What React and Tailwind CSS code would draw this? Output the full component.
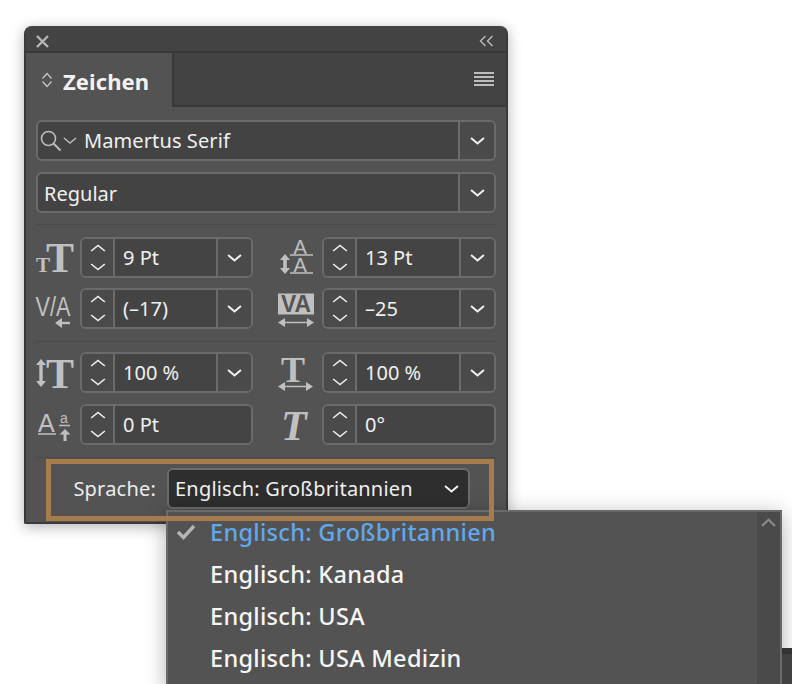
import React from "react";

const Chevron = ({ w = 15, h = 8, className = "", stroke = "#f2f2f2", sw = 1.8 }) => (
  <svg width={w} height={h} viewBox="0 0 14 8" preserveAspectRatio="none" fill="none" className={className}>
    <path d="M1 1 L7 6.5 L13 1" stroke={stroke} strokeWidth={sw} />
  </svg>
);

const Stepper = () => (
  <div className="w-[33px] h-full shrink-0 flex flex-col items-center justify-center gap-[11px] border-r-2 border-[#6b6b6b] bg-[#4a4a4a]">
    <Chevron w={16} h={8} className="rotate-180" stroke="#ececec" sw={1.4} />
    <Chevron w={16} h={8} stroke="#ececec" sw={1.4} />
  </div>
);

const NumField = ({ value, dropdown = true }) => (
  <div className="flex-1 h-[41px] flex items-center rounded-[6px] border-2 border-[#6b6b6b] bg-[#444444] overflow-hidden">
    <Stepper />
    <span className="flex-1 pl-[8px] text-[20px] leading-none text-[#f0f0f0]">{value}</span>
    {dropdown && (
      <div className="w-[35px] h-full shrink-0 flex items-center justify-center border-l-2 border-[#6b6b6b] bg-[#4a4a4a]">
        <Chevron />
      </div>
    )}
  </div>
);

const serif = { fontFamily: '"Liberation Serif", serif' };
const sans = { fontFamily: '"Liberation Sans", sans-serif' };
const G = "#c0c0c0";

const IconSize = () => (
  <svg width="40" height="36" viewBox="0 0 40 36" className="overflow-visible">
    <text x="0" y="31.5" fontSize="21" fontWeight="700" fill={G} style={serif}>T</text>
    <text x="10" y="31.5" fontSize="42" fontWeight="700" fill={G} style={serif}>T</text>
  </svg>
);
const IconLeading = () => (
  <svg width="36" height="38" viewBox="0 0 36 38" className="overflow-visible">
    <text x="14.5" y="15" fontSize="20" fill={G} style={sans}>A</text>
    <path d="M11 16h23M11 34h23" stroke={G} strokeWidth="1.5" />
    <text x="14.5" y="33" fontSize="20" fill={G} style={sans}>A</text>
    <path d="M6 15l-5 6h3.2v8H1l5 6 5-6H7.8v-8H11z" fill={G} />
  </svg>
);
const IconKern = () => (
  <svg width="36" height="36" viewBox="0 0 36 36" className="overflow-visible">
    <text x="-0.5" y="25" fontSize="27" fill={G} style={sans} textLength="35" lengthAdjust="spacingAndGlyphs">V/A</text>
    <path d="M34 32H22" stroke={G} strokeWidth="2.4" />
    <path d="M26 27l-7 5 7 5z" fill={G} />
  </svg>
);
const IconTrack = () => (
  <svg width="36" height="36" viewBox="0 0 36 36" className="overflow-visible">
    <rect x="0" y="2.5" width="36" height="21" fill={G} />
    <text x="3" y="21" fontSize="23" fontWeight="700" fill="#535353" style={sans} textLength="30" lengthAdjust="spacingAndGlyphs">VA</text>
    <path d="M3 31.5h30" stroke={G} strokeWidth="1.5" />
    <path d="M0 31.5l7-4.5v9zM36 31.5l-7-4.5v9z" fill={G} />
  </svg>
);
const IconVScale = () => (
  <svg width="38" height="30" viewBox="0 0 38 30" className="overflow-visible">
    <path d="M5 1l5 6H6.7v16H10l-5 6-5-6h3.3V7H0z" fill={G} />
    <text x="10" y="29.5" fontSize="42" fontWeight="700" fill={G} style={serif}>T</text>
  </svg>
);
const IconHScale = () => (
  <svg width="35" height="34" viewBox="0 0 35 34" className="overflow-visible">
    <text x="3" y="25.5" fontSize="36" fontWeight="700" fill={G} style={serif}>T</text>
    <path d="M3 30.5h29" stroke={G} strokeWidth="1.5" />
    <path d="M0 30.5l7-4.5v9zM35 30.5l-7-4.5v9z" fill={G} />
  </svg>
);
const IconBaseline = () => (
  <svg width="34" height="33" viewBox="0 0 34 33" className="overflow-visible">
    <text x="0" y="23.5" fontSize="25" fill={G} style={sans}>A</text>
    <path d="M0 26h18" stroke={G} strokeWidth="1.5" />
    <text x="22" y="14.5" fontSize="14" fill={G} style={sans}>a</text>
    <path d="M21 17.5h11" stroke={G} strokeWidth="1.5" />
    <path d="M27 21l-5.5 5.5h4v6.5h3v-6.5h4z" fill={G} />
  </svg>
);
const IconSkew = () => (
  <svg width="34" height="30" viewBox="0 0 34 30" className="overflow-visible">
    <text x="0" y="29.5" fontSize="42" fontWeight="700" fontStyle="italic" fill={G} style={serif}>T</text>
  </svg>
);

const Row = ({ icon, value, dropdown, iconClass = "" }) => (
  <div className="flex items-center">
    <div className={`w-[44px] shrink-0 h-[41px] flex items-center justify-start ${iconClass}`}>{icon}</div>
    <NumField value={value} dropdown={dropdown} />
  </div>
);

const BigField = ({ children }) => (
  <div className="h-[41px] flex items-center rounded-[6px] border-2 border-[#6b6b6b] bg-[#434343] overflow-hidden">
    <div className="flex-1 flex items-center min-w-0">{children}</div>
    <div className="w-[36px] h-full shrink-0 flex items-center justify-center border-l-2 border-[#6b6b6b] bg-[#4a4a4a]">
      <Chevron />
    </div>
  </div>
);

const Item = ({ children, active }) => (
  <div className={`h-[42px] flex items-center pl-[42px] text-[23.5px] font-medium leading-none tracking-[0.3px] ${active ? "text-[#62a8ec]" : "text-[#f6f6f6]"}`}>
    {children}
  </div>
);

export default function App() {
  return (
    <div
      className="relative w-[792px] h-[684px] overflow-hidden bg-white pt-[26px] pl-[24px]"
      style={{ fontFamily: '"Noto Sans", sans-serif' }}
    >
      <div className="w-[484px] h-[498px] flex flex-col rounded-t-[8px] rounded-b-[2px] bg-[#535353] border-x-2 border-b-2 border-[#3a3a3a] shadow-[0_3px_14px_rgba(0,0,0,0.3)]">
        <div className="h-[27px] shrink-0 flex items-center justify-between pt-[5px] pl-[9px] pr-[12px] bg-[#434343] rounded-t-[8px] border-b-2 border-[#383838]">
          <svg width="15" height="15" viewBox="0 0 15 15">
            <path d="M2 2l11 11M13 2L2 13" stroke="#b5b5b5" strokeWidth="2.4" />
          </svg>
          <svg width="15" height="12" viewBox="0 0 15 12" fill="none">
            <path d="M6.5 1L1.5 6l5 5M13.5 1l-5 5 5 5" stroke="#bdbdbd" strokeWidth="1.4" />
          </svg>
        </div>
        <div className="h-[54px] shrink-0 flex items-stretch bg-[#434343]">
          <div className="w-[146px] flex items-center pl-[15px] gap-[10px] bg-[#535353]">
            <svg width="12" height="18" viewBox="0 0 12 18" fill="none">
              <path d="M1.5 7.5L6 2.5l4.5 5M1.5 10.5L6 15.5l4.5-5" stroke="#c4c4c4" strokeWidth="1.3" />
            </svg>
            <span className="pt-[2px] text-[22px] font-bold leading-none text-[#f2f2f2] tracking-[0.1px]">Zeichen</span>
          </div>
          <div className="flex-1 flex items-center justify-end pr-[12px] border-b-2 border-l-2 border-[#383838]">
            <div className="w-[20px] flex flex-col gap-[2px]">
              <div className="h-[2px] bg-[#bdbdbd]" />
              <div className="h-[2px] bg-[#bdbdbd]" />
              <div className="h-[2px] bg-[#bdbdbd]" />
              <div className="h-[2px] bg-[#bdbdbd]" />
            </div>
          </div>
        </div>

        <div className="flex-1 flex flex-col pt-[13px] pl-[10px] pr-[10px]">
          <BigField>
            <svg width="44" height="26" viewBox="0 0 44 26" fill="none" className="ml-[1px] shrink-0">
              <circle cx="9.5" cy="10.5" r="7" stroke="#bdbdbd" strokeWidth="1.6" />
              <path d="M14.5 15.5l7 7" stroke="#bdbdbd" strokeWidth="2" />
              <path d="M25 10l6 5 6-5" stroke="#bdbdbd" strokeWidth="1.5" />
            </svg>
            <span className="ml-[1px] text-[20px] leading-none text-[#f0f0f0] tracking-[0.1px]">Mamertus Serif</span>
          </BigField>
          <div className="mt-[11px]">
            <BigField>
              <span className="ml-[6px] pt-[3px] text-[20px] leading-none text-[#f0f0f0]">Regular</span>
            </BigField>
          </div>

          <div className="mt-[11px] h-[1px] bg-[#4a4a4a]" />

          <div className="mt-[12px] grid grid-cols-[217px_218px] gap-x-[25px] gap-y-[10px]">
            <Row icon={<IconSize />} value="9 Pt" />
            <Row icon={<IconLeading />} value="13 Pt" iconClass="pl-[1px]" />
            <Row icon={<IconKern />} value="(–17)" />
            <Row icon={<IconTrack />} value="–25" />
          </div>

          <div className="mt-[12px] h-[1px] bg-[#4a4a4a]" />

          <div className="mt-[10px] grid grid-cols-[217px_218px] gap-x-[25px] gap-y-[11px]">
            <Row icon={<IconVScale />} value="100 %" />
            <Row icon={<IconHScale />} value="100 %" />
            <Row icon={<IconBaseline />} value="0 Pt" dropdown={false} iconClass="pl-[2px]" />
            <Row icon={<IconSkew />} value="0°" dropdown={false} iconClass="pl-[3px]" />
          </div>

          <div className="mt-[12px] h-[1px] bg-[#4a4a4a]" />

          <div className="mt-[10px] flex items-center justify-end pr-[26px]">
            <span className="mr-[11px] text-[20px] leading-none text-[#ececec] tracking-[0.2px]">Sprache:</span>
            <div className="w-[303px] h-[41px] flex items-center justify-between pl-[6px] pr-[9px] rounded-[6px] border-2 border-[#6b6b6b] bg-[#2e2e2e]">
              <span className="text-[20px] leading-none text-[#f0f0f0] tracking-[0.2px]">Englisch: Großbritannien</span>
              <Chevron />
            </div>
          </div>
        </div>
      </div>

      {/* open list */}
      <div className="absolute left-[166px] top-[510px] w-[616px] h-[180px] flex bg-[#535353] border-2 border-[#6a6a6a] border-b-0 shadow-[0_4px_20px_rgba(0,0,0,0.3)]">
        <div className="relative flex-1">
          <svg width="20" height="16" viewBox="0 0 20 16" className="absolute left-[8px] top-[12px]">
            <path d="M2 8l5.5 5.5L18 2" stroke="#b5b5b5" strokeWidth="3.4" fill="none" />
          </svg>
          <Item active>Englisch: Großbritannien</Item>
          <Item>Englisch: Kanada</Item>
          <Item>Englisch: USA</Item>
          <Item>Englisch: USA Medizin</Item>
        </div>
        <div className="w-[23px] bg-[#4a4a4a] flex justify-center pt-[6px]">
          <Chevron w={15} h={9} className="rotate-180" stroke="#8a8a8a" sw={2} />
        </div>
      </div>

      {/* highlight frame */}
      <div className="absolute left-[46px] top-[459px] w-[448px] h-[62px] border-[5px] border-[#a67c4c] pointer-events-none" />

      {/* sliver of another panel */}
      <div className="absolute left-[782px] top-[648px] w-[10px] h-[36px] bg-[#414141] border-t-[6px] border-[#333333]" />
    </div>
  );
}
